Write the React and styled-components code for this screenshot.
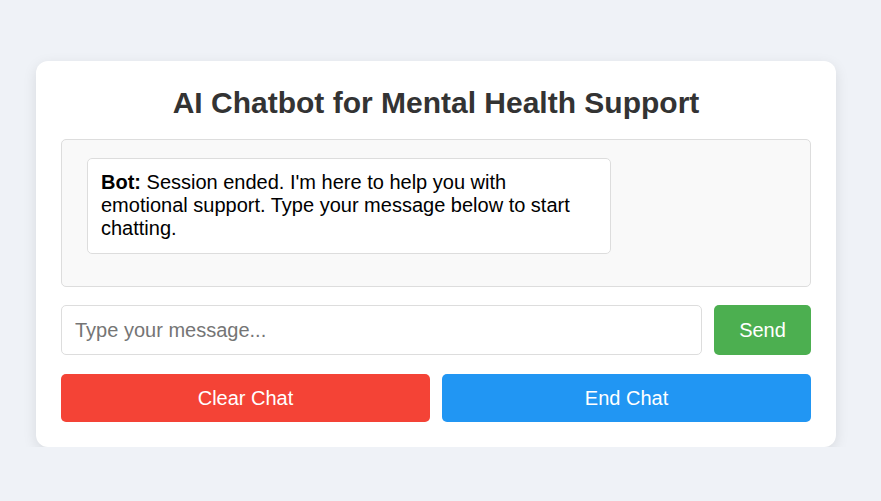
import React from 'react'
import styled, { createGlobalStyle } from 'styled-components'

const GlobalStyle = createGlobalStyle`
    * {
        box-sizing: border-box;
    }
    body {
        margin: 0;
        background: #eff2f7;
        font-family: "Liberation Sans", Arial, sans-serif;
    }
`

const Page = styled.div`
    padding: 61px 0 0 36px;
`

const Card = styled.div`
    width: 800px;
    background: #fff;
    border-radius: 12px;
    padding: 25px;
    box-shadow: 0 4px 14px rgba(0, 0, 0, 0.1);
`

const Title = styled.h2`
    margin: 0 0 19px;
    text-align: center;
    font-size: 30px;
    line-height: 34px;
    color: #333;
`

const ChatBox = styled.div`
    height: 148px;
    overflow-y: auto;
    background: #f9f9f9;
    border: 1px solid #ddd;
    border-radius: 5px;
    padding: 18px 15px 15px 25px;
`

const Message = styled.div`
    width: 524px;
    background: #fff;
    border: 1px solid #ddd;
    border-radius: 5px;
    padding: 12px 18px 13px 13px;
    font-size: 20px;
    line-height: 23px;
    color: #000;
`

const Row = styled.div`
    display: flex;
    gap: 12px;
    margin-top: ${p => p.$top}px;
`

const Input = styled.input`
    flex: 1;
    height: 50px;
    padding: 0 13px;
    border: 1px solid #ddd;
    border-radius: 5px;
    font-family: inherit;
    font-size: 20px;
    color: #333;
    outline: none;
    &::placeholder {
        color: #757575;
    }
`

const Button = styled.button`
    flex: ${p => (p.$grow ? 1 : 'none')};
    width: ${p => (p.$grow ? 'auto' : '97px')};
    height: ${p => p.$h}px;
    border: none;
    border-radius: 5px;
    background: ${p => p.$color};
    color: #fff;
    font-family: inherit;
    font-size: 20px;
    cursor: pointer;
`

export default function App() {
    return (
        <Page>
            <GlobalStyle />
            <Card>
                <Title>AI Chatbot for Mental Health Support</Title>
                <ChatBox>
                    <Message>
                        <b>Bot:</b> Session ended. I'm here to help you with emotional support. Type your message below to start chatting.
                    </Message>
                </ChatBox>
                <Row $top={18}>
                    <Input placeholder="Type your message..." />
                    <Button $color="#4caf50" $h={50}>Send</Button>
                </Row>
                <Row $top={19}>
                    <Button $grow $color="#f44336" $h={48}>Clear Chat</Button>
                    <Button $grow $color="#2196f3" $h={48}>End Chat</Button>
                </Row>
            </Card>
        </Page>
    )
}
